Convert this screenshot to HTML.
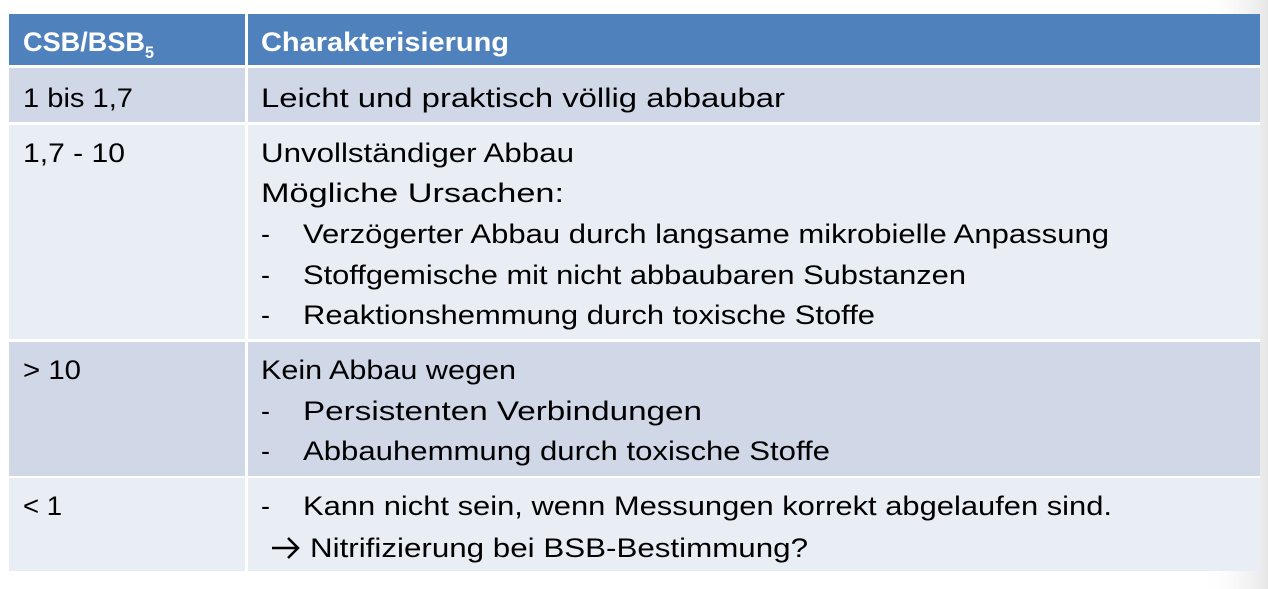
<!DOCTYPE html>
<html><head><meta charset="utf-8"><style>
html,body{margin:0;padding:0;background:#fff;}
svg{display:block;}
text{font-family:"Liberation Sans",sans-serif;font-size:27px;fill:#000;}
.h{fill:#fff;font-weight:bold;}
</style></head><body>
<svg width="1268" height="589" viewBox="0 0 1268 589" xmlns="http://www.w3.org/2000/svg">
<defs>
<linearGradient id="sh" x1="0" x2="1" y1="0" y2="0">
<stop offset="0" stop-color="#fff" stop-opacity="0"/>
<stop offset="1" stop-color="#e6e6e6"/>
</linearGradient>
</defs>
<rect x="1200" y="0" width="68" height="589" fill="url(#sh)"/>
<rect x="9" y="14" width="1251" height="51" fill="#4f81bd"/>
<rect x="9" y="68" width="1251" height="54" fill="#d0d8e8"/>
<rect x="9" y="125" width="1251" height="214" fill="#e9edf4"/>
<rect x="9" y="342" width="1251" height="134" fill="#d0d8e8"/>
<rect x="9" y="478" width="1251" height="93" fill="#e9edf4"/>
<rect x="245" y="14" width="3" height="557" fill="#fff"/>
<rect x="9" y="65" width="1251" height="3" fill="#fff"/>
<rect x="9" y="122" width="1251" height="3" fill="#fff"/>
<rect x="9" y="339" width="1251" height="3" fill="#fff"/>
<rect x="9" y="476" width="1251" height="2" fill="#fff"/>

<text class="h" x="23" y="51" textLength="122" lengthAdjust="spacingAndGlyphs">CSB/BSB</text>
<text class="h" x="145" y="58" style="font-size:17px" textLength="9" lengthAdjust="spacingAndGlyphs">5</text>
<text class="h" x="261" y="51" textLength="248" lengthAdjust="spacingAndGlyphs">Charakterisierung</text>

<text x="23" y="107" textLength="110" lengthAdjust="spacingAndGlyphs">1 bis 1,7</text>
<text x="261" y="107" textLength="524" lengthAdjust="spacingAndGlyphs">Leicht und praktisch völlig abbaubar</text>

<text x="23" y="162" textLength="102" lengthAdjust="spacingAndGlyphs">1,7 - 10</text>
<text x="261" y="162" textLength="313" lengthAdjust="spacingAndGlyphs">Unvollständiger Abbau</text>
<text x="261" y="202" textLength="303" lengthAdjust="spacingAndGlyphs">Mögliche Ursachen:</text>
<text x="261" y="243">-</text>
<text x="303" y="243" textLength="806" lengthAdjust="spacingAndGlyphs">Verzögerter Abbau durch langsame mikrobielle Anpassung</text>
<text x="261" y="284">-</text>
<text x="303" y="284" textLength="663" lengthAdjust="spacingAndGlyphs">Stoffgemische mit nicht abbaubaren Substanzen</text>
<text x="261" y="324">-</text>
<text x="303" y="324" textLength="572" lengthAdjust="spacingAndGlyphs">Reaktionshemmung durch toxische Stoffe</text>

<text x="23" y="379" textLength="58" lengthAdjust="spacingAndGlyphs">&gt; 10</text>
<text x="261" y="379" textLength="255" lengthAdjust="spacingAndGlyphs">Kein Abbau wegen</text>
<text x="261" y="420">-</text>
<text x="303" y="420" textLength="399" lengthAdjust="spacingAndGlyphs">Persistenten Verbindungen</text>
<text x="261" y="460">-</text>
<text x="303" y="460" textLength="527" lengthAdjust="spacingAndGlyphs">Abbauhemmung durch toxische Stoffe</text>

<text x="23" y="515" textLength="39" lengthAdjust="spacingAndGlyphs">&lt; 1</text>
<text x="261" y="515">-</text>
<text x="303" y="515" textLength="809" lengthAdjust="spacingAndGlyphs">Kann nicht sein, wenn Messungen korrekt abgelaufen sind.</text>
<path d="M272 548 H298 M288 538 L298 548 L288 558" stroke="#000" stroke-width="2.5" fill="none"/>
<text x="310" y="557" textLength="498" lengthAdjust="spacingAndGlyphs">Nitrifizierung bei BSB-Bestimmung?</text>
</svg>
</body></html>
